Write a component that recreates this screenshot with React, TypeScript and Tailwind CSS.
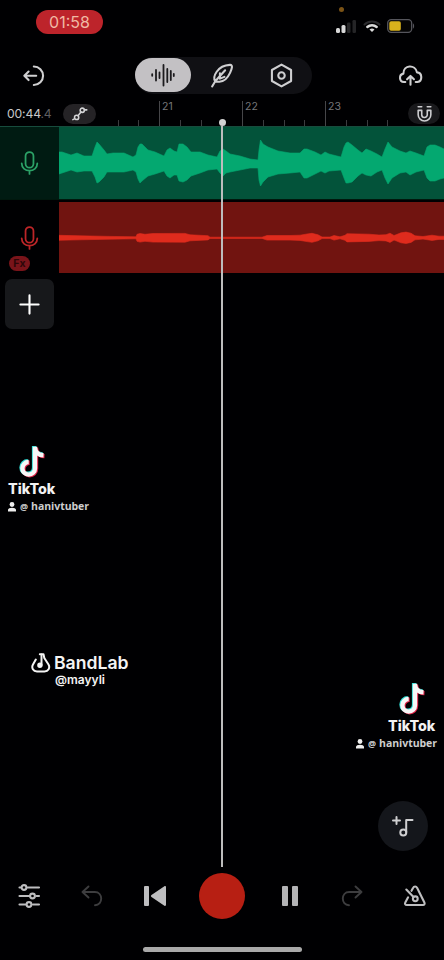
import type { ReactNode } from 'react'

// [x, top, bottom] in timeline pixels
const GUITAR: number[][] = [
  [0, 25, 47], [3, 25, 46], [12, 28, 43], [18, 26, 45], [25, 29, 44], [33, 29, 44], [36, 20, 50], [38, 15, 56],
  [40, 17, 55], [45, 23, 50], [48, 27, 45], [54, 26, 45], [65, 26, 45], [74, 30, 43], [77, 28, 45], [79, 20, 52],
  [81, 17, 56], [83, 17, 54], [89, 23, 49], [96, 25, 47], [105, 29, 44], [108, 23, 49], [111, 21, 51], [115, 24, 48],
  [118, 25, 48], [120, 17, 54], [124, 17, 55], [128, 20, 53], [132, 25, 49], [141, 25, 46], [149, 28, 43],
  [158, 30, 42], [161, 24, 46], [164, 22, 49], [167, 24, 46], [171, 27, 45], [181, 29, 43], [191, 32, 41],
  [199, 33, 41], [200, 23, 53], [201.5, 13, 59], [204, 17, 55], [209, 20, 50], [219, 24, 47], [231, 26, 46],
  [241, 26, 45], [245, 22, 51], [248, 22, 51], [256, 25, 47], [262, 28, 44], [266, 25, 46], [270, 27, 44],
  [282, 30, 43], [285, 20, 51], [287, 16, 56], [289, 15, 56], [293, 18, 55], [299, 23, 49], [303, 26, 46],
  [307, 22, 48], [312, 24, 49], [318, 27, 45], [323, 30, 43], [326, 22, 51], [329, 15, 57], [333, 20, 51],
  [341, 24, 46], [347, 26, 45], [351, 24, 48], [357, 26, 45], [365, 29, 43], [368, 20, 51], [371, 18, 54],
  [376, 18, 54], [381, 20, 52], [385, 22, 51],
]

// [x, half height] around the centre line
const VOCAL_LEVELS: number[][] = [
  [0, 2.5], [21, 2], [51, 1.4], [77, 1], [78, 3.5], [81, 4.3], [86, 3.5], [94, 4.3], [126, 4.4], [131, 3],
  [149, 2.1], [151, 0.6], [203, 0.6], [208, 2.3], [231, 2.3], [241, 2.6], [248, 3.8], [253, 4.5], [259, 3], [263, 0.8],
  [271, 0.8], [275, 2.3], [281, 1], [286, 2.5], [288, 4.1], [310, 3.6], [320, 2.8], [327, 3.1], [331, 4.6],
  [335, 2.3], [337, 3], [342, 5], [347, 5.7], [352, 4.6], [356, 2], [364, 1.3], [373, 2.6], [380, 1.6], [385, 1.6],
]
const VOCAL = VOCAL_LEVELS.map(([x, h]) => [x, 35.8 - h, 35.8 + h])

const TICKS = Array.from({ length: 14 }, (_, i) => i)
const BARS: Record<number, string> = { 2: '21', 6: '22', 10: '23' }

const wavePoints = (data: number[][]) =>
  [...data.map(([x, t]) => `${x},${t}`), ...[...data].reverse().map(([x, , b]) => `${x},${b}`)].join(' ')

function Icon({ size = 24, className = '', width = 1.8, children }: {
  size?: number
  className?: string
  width?: number
  children: ReactNode
}) {
  return (
    <svg
      width={size} height={size} viewBox="0 0 24 24" fill="none" stroke="currentColor"
      strokeWidth={width} strokeLinecap="round" strokeLinejoin="round" className={`shrink-0 ${className}`}
    >
      {children}
    </svg>
  )
}

function StatusBar() {
  return (
    <header className="relative flex h-11 items-start justify-between pt-[10px] pr-[29px] pl-[36px]">
      <div className="flex h-6 w-[67px] items-center justify-center rounded-full bg-[#bd242b] text-[16px] text-[#f0b9a4]">
        01:58
      </div>
      <span className="absolute top-[7px] left-[339px] size-[5px] rounded-full bg-[#7b5316]" />
      <div className="mt-[9px] flex h-[14px] items-center">
        <svg width="21" height="13" viewBox="0 0 21 13">
          <rect x="0" y="8" width="4" height="5" rx="1.5" fill="#d8d8d8" />
          <rect x="5.5" y="5" width="4" height="8" rx="1.5" fill="#d8d8d8" />
          <rect x="11" y="2.5" width="3.5" height="10.5" rx="1.2" fill="#252527" />
          <rect x="16.5" y="0" width="3.5" height="13" rx="1.2" fill="#252527" />
        </svg>
        <svg width="18" height="13" viewBox="0 0 18 13" className="ml-[6px]" fill="none" strokeLinecap="round">
          <path d="M1.5 4.5a11 11 0 0 1 15 0" stroke="#2b2b2e" strokeWidth="2" />
          <path d="M4.3 7a7 7 0 0 1 9.4 0" stroke="#dcdcdc" strokeWidth="2.4" />
          <path d="M6.5 9.5a4 4 0 0 1 5 0L9 12Z" fill="#dcdcdc" />
        </svg>
        <svg width="28" height="14" viewBox="0 0 28 14" className="ml-[6px]">
          <rect x=".7" y=".7" width="24" height="12.6" rx="3.5" fill="#050505" stroke="#55555c" strokeWidth="1.3" />
          <rect x="2.3" y="2.3" width="11.5" height="9.4" rx="1.8" fill="#d9b21c" />
          <path d="M26 4.5c1.5.6 1.5 4.4 0 5" fill="#55555c" />
        </svg>
      </div>
    </header>
  )
}

function TopBar() {
  return (
    <nav className="flex h-[57px] items-center justify-between pt-[5px] pr-[21px] pl-[21px] text-[#cfcfd1]">
      <button>
        <Icon size={25} width={2}>
          <path d="M12.3 3.3a8.9 8.9 0 0 1 0 17.8" />
          <path d="M14.6 12.3H3.3M7.3 8.2l-4.1 4.1 4.1 4.1" />
        </Icon>
      </button>
      <div className="ml-[2px] flex h-[37px] w-[177px] items-center rounded-full bg-[#101014]">
        <button className="flex h-[34px] w-[56px] items-center justify-center rounded-full bg-[#c3c1c4] text-[#1c1b1e]">
          <Icon size={24} width={1.8}>
            <path d="M1.2 11.2v1.6M5 7v10.5M8.5 9.5v5.5M12.5 2v20.5M16.3 6v13M19.8 8v9M22.8 11v2" />
          </Icon>
        </button>
        <button className="flex flex-1 justify-center">
          <Icon size={25} width={2}>
            <path d="M3 22.5 6 17.5C3.2 13.5 7.8 2.500 20 1.800c3.500-.2 1.800 4.200.2 7.700-2.400 5.200-6 8.300-10.200 8.500-1.500.1-2.900 0-4-.5L15.500 7" />
            <path d="M10.500 9.800v5.200l4.300-1.700" />
          </Icon>
        </button>
        <button className="flex w-[60px] items-center justify-center">
          <Icon size={25} width={2}>
            <path d="m12 1.5 9.2 5.2v10.6L12 22.5l-9.2-5.2V6.7Z" />
            <circle cx="12" cy="12" r="3.1" />
          </Icon>
        </button>
      </div>
      <button>
        <Icon size={25} width={2}>
          <path d="M7 18.3H5.7A4.1 4.1 0 0 1 5.2 10.2C5 1.5 16.7 1 18.2 9c5.4.4 5.5 8.4.5 9.3H17" />
          <path d="M12 20.8v-8.3M8.7 15.7l3.300-3.300 3.300 3.300" />
        </Icon>
      </button>
    </nav>
  )
}

function Ruler() {
  return (
    <div className="flex h-[25px] items-center">
      <div className="flex w-[117.5px] shrink-0 items-center">
        <span className="w-[63px] pl-[7px] text-[12.2px] leading-4 tracking-[-0.15px] whitespace-nowrap text-[#c7c7c9]">
          00:44<span className="text-[#5e5e61]">.4</span>
        </span>
        <button className="flex h-5 w-[33px] items-center justify-center rounded-full bg-[#252326] text-[#d3d3d5]">
          <Icon size={18} width={2.1}>
            <circle cx="7.5" cy="16.5" r="2.8" />
            <circle cx="15" cy="7" r="2.8" />
            <path d="M2.5 19.5l2-1M9.3 14.3l4-5M18 6.5h3" />
          </Icon>
        </button>
      </div>
      <div className="flex h-full items-end">
        {TICKS.map(i => (
          <div
            key={i}
            className={`w-[20.75px] shrink-0 border-l ${BARS[i] ? 'h-[25px] border-[#464649]' : 'h-[6px] border-[#3c3c3f]'}`}
          >
            {BARS[i] && <span className="block pl-[2px] text-[10.5px] leading-[11px] text-[#77777a]">{BARS[i]}</span>}
          </div>
        ))}
      </div>
      <button className="flex h-[21px] w-[32px] items-center justify-center rounded-full bg-[#19191c] text-[#cdcdd0]">
        <Icon size={19} width={2}>
          <path d="M4 8v5.500a8 8 0 0 0 16 0V8h-4.500v5.500a3.500 3.500 0 0 1-7 0V8ZM4 3.500h4.500M15.500 3.500H20" />
        </Icon>
      </button>
    </div>
  )
}

function Mic() {
  return (
    <Icon size={25} width={1.7}>
      <rect x="8.2" y="1" width="7.6" height="15" rx="3.8" />
      <path d="M4.500 11.800c0 9.500 15 9.500 15 0M12 19v3" />
    </Icon>
  )
}

function Wave({ data, fill }: { data: number[][]; fill: string }) {
  return (
    <svg width="385" height="72" viewBox="0 0 385 72" className="block">
      <polygon points={wavePoints(data)} fill={fill} stroke={fill} strokeWidth="0.6" strokeLinejoin="round" />
    </svg>
  )
}

function Tracks() {
  return (
    <section>
      <div className="flex h-[74px] border-t border-b border-t-[#174c3d] border-b-[#00180d] bg-[#001b12]">
        <div className="flex w-[59px] items-center justify-center pr-px text-[#2ba267]">
          <Mic />
        </div>
        <div className="flex-1 overflow-hidden bg-[#03533a]">
          <Wave data={GUITAR} fill="#04a870" />
        </div>
      </div>
      <div className="mt-[2px] flex h-[71px]">
        <div className="w-[59px] pt-[24px] text-[#bd2528]">
          <div className="flex justify-center pr-px">
            <Mic />
          </div>
          <span className="mt-[5px] ml-[9px] flex h-[15px] w-[21px] items-center justify-center rounded-full bg-[#79141a] text-[10.5px] font-bold text-[#2c0709]">
            Fx
          </span>
        </div>
        <div className="flex-1 overflow-hidden bg-[#711410]">
          <Wave data={VOCAL} fill="#df2b1d" />
        </div>
      </div>
      <button className="mt-[6px] ml-[5px] flex h-[50px] w-[49px] items-center justify-center rounded-[7px] bg-[#17181b] pr-px text-white">
        <Icon size={23} width={2.2}>
          <path d="M12 2.5v19M2.5 12h19" />
        </Icon>
      </button>
    </section>
  )
}

const NOTE = 'M16.5 1v21.5a6.3 6.3 0 1 1-6.3-6.3M16.5 1.5c.3 4.8 3.5 7.800 8.500 8'

function TikTokMark({ className }: { className: string }) {
  return (
    <div className={`absolute w-[84px] text-[#f2f2f2] ${className}`}>
      <svg width="29" height="33" viewBox="0 0 29 33" className="ml-[10px] block" fill="none" strokeWidth="4.4">
        <path d={NOTE} stroke="#2edbd4" transform="translate(-.4 0)" />
        <path d={NOTE} stroke="#df2146" transform="translate(1.5 1.6)" />
        <path d={NOTE} stroke="#f7f7f7" transform="translate(.5 .8)" />
      </svg>
      <div className="mt-[3px] text-[14.3px] leading-[15px] font-extrabold">TikTok</div>
      <div className="mt-[5px] flex h-3 items-center font-['Open_Sans',sans-serif] text-[10.5px] font-bold whitespace-nowrap text-[#cecece]">
        <svg width="8" height="10" viewBox="0 0 8 10" fill="#eee">
          <circle cx="4" cy="2.5" r="2.4" />
          <path d="M0 9.5V8c0-3 8-3 8 0v1.5Z" />
        </svg>
        <span className="ml-[4px] text-[9px]">@</span>
        <span className="ml-[3px] tracking-[-0.05px]">hanivtuber</span>
      </div>
    </div>
  )
}

function BandLabMark() {
  return (
    <div className="absolute top-[653px] left-[31px] w-[98px] text-[#f4f4f4]">
      <div className="flex h-5 items-center">
        <svg width="20" height="20" viewBox="0 0 20 20" fill="none" stroke="currentColor" strokeWidth="2" strokeLinejoin="round" strokeLinecap="round">
          <path d="M4.800 6.500 2 11.500c-1.900 3.500.2 6.900 4 6.900h7.500c3.800 0 5.900-3.400 4-6.900L13.300 5 12.500 1.300H8.800" />
          <path d="M10.500 1.500v10.500" />
          <circle cx="8.900" cy="12.200" r="1.700" fill="currentColor" />
        </svg>
        <span className="ml-[3px] text-[17.6px] leading-5 font-semibold">BandLab</span>
      </div>
      <div className="text-center text-[12px] leading-[14px] font-semibold">@mayyli</div>
    </div>
  )
}

function Transport() {
  return (
    <footer className="flex h-[56px] items-center gap-[33px] px-[14px] text-[#bebec0]">
      <button className="flex w-[30px] justify-center">
        <Icon size={24} width={2.1}>
          <path d="M2.5 3.5h1M10.5 3.5h11.500M2.5 12h10M19.5 12H22M2.5 20.5h6M16 20.5h6" />
          <circle cx="7" cy="3.5" r="2.4" />
          <circle cx="15.5" cy="12" r="2.4" />
          <circle cx="12" cy="20.5" r="2.4" />
        </Icon>
      </button>
      <button className="flex w-[30px] justify-center text-[#3d3d3f]">
        <Icon size={24} width={1.9}>
          <path d="M8.5 2.5 2.5 8l6 5.5M2.5 8h12.3c8.5 0 8.5 13.200.2 13.200" />
        </Icon>
      </button>
      <button className="flex w-[30px] justify-center">
        <svg width="22" height="20" viewBox="0 0 22 20" fill="currentColor">
          <rect x="0" y="0" width="5" height="20" rx="1" />
          <path d="M22 1.2v17.6c0 1-.8 1.5-1.6.9L7.5 11c-.8-.6-.8-1.4 0-2L20.4.3c.8-.6 1.6-.1 1.6.9Z" />
        </svg>
      </button>
      <button className="-mx-1 size-[46px] shrink-0 rounded-full bg-[#b71f13]" />
      <button className="flex w-[30px] justify-center gap-[4px] pl-px">
        <span className="h-5 w-[6px] rounded-[1px] bg-[#b4b4b6]" />
        <span className="h-5 w-[6px] rounded-[1px] bg-[#b4b4b6]" />
      </button>
      <button className="flex w-[30px] justify-center text-[#3d3d3f]">
        <Icon size={24} width={1.9}>
          <path d="m15.5 2.5 6 5.5-6 5.5M21.5 8H9.2C.7 8 .7 21.200 9 21.200" />
        </Icon>
      </button>
      <button className="flex w-[30px] justify-center">
        <Icon size={24} width={2.1}>
          <path d="M8.5 6.8 10 4c1-2 3.2-2 4.2 0l7.2 14.5c.6 1.4 0 2.5-1.4 2.5H3.8c-1.6 0-2.2-1.2-1.5-2.5l2.8-5.2" />
          <path d="M3.3 5.5 10.5 13" />
          <circle cx="12.3" cy="14.8" r="2.4" />
        </Icon>
      </button>
    </footer>
  )
}

export default function App() {
  return (
    <div className="relative flex h-[960px] w-[444px] flex-col overflow-hidden bg-[#000002] font-[Inter,sans-serif]">
      <StatusBar />
      <TopBar />
      <Ruler />
      <main className="flex-1">
        <Tracks />
      </main>

      {/* playhead */}
      <div className="absolute top-[119px] left-[218px] flex h-[748px] w-2 flex-col items-center">
        <span className="size-[7px] shrink-0 rounded-full bg-[#d2d2d2]" />
        <span className="w-[1.5px] flex-1 bg-[#bdbdbd]" />
      </div>

      <TikTokMark className="top-[445px] left-[8px]" />
      <BandLabMark />
      <TikTokMark className="top-[682px] left-[356px] [&>div:first-of-type]:ml-8 [&>svg]:ml-[42px]" />

      <button className="absolute top-[801px] left-[378px] flex size-[50px] items-center justify-center rounded-full bg-[#14161b] text-[#cfcfd1]">
        <Icon size={24} width={2}>
          <path d="M2 6.500h7M5.500 3v7M21.500 6h-6.300v12" />
          <circle cx="12.3" cy="18.5" r="3" />
        </Icon>
      </button>

      <Transport />
      <div className="flex h-9 items-start justify-center pt-[23px]">
        <span className="h-[5px] w-[159px] rounded-full bg-[#a9a9a9]" />
      </div>
    </div>
  )
}
